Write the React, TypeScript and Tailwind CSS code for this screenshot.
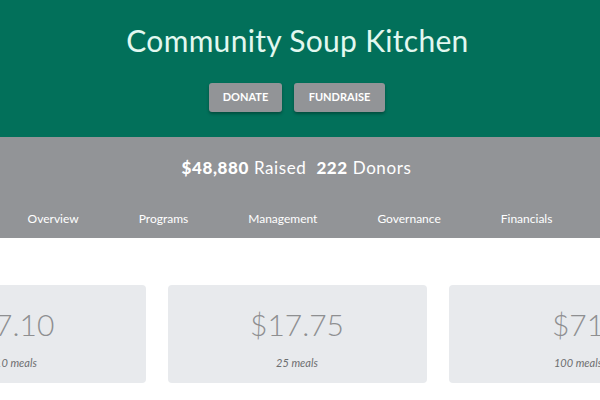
const navItems = ["Overview", "Programs", "Management", "Governance", "Financials"];

const gifts = [
	{ price: "$7.10", label: "10 meals" },
	{ price: "$17.75", label: "25 meals" },
	{ price: "$71", label: "100 meals" },
];

function App() {
	return (
		<div className="w-[600px] h-[400px] overflow-hidden bg-white font-['Lato',sans-serif]">
			<div className="bg-[#02705a] h-[137px] flex flex-col items-center pt-[21px]">
				<h1 className="text-[30px] leading-[38px] text-[#e2f8f0] tracking-[0.3px] ml-[-5px]">Community Soup Kitchen</h1>
				<div className="flex gap-3 mt-[24px] ml-[-6px]">
					<button className="w-[73px] h-[29px] rounded-[3px] bg-[#929497] text-white text-[11px] font-bold shadow-[0_2px_3px_rgba(0,0,0,0.3)]">
						DONATE
					</button>
					<button className="w-[91px] h-[29px] rounded-[3px] bg-[#929497] text-white text-[11px] font-bold shadow-[0_2px_3px_rgba(0,0,0,0.3)]">
						FUNDRAISE
					</button>
				</div>
			</div>
			<div className="bg-[#929497] h-[101px] flex flex-col items-center text-white">
				<div className="mt-[20px] text-[17px] leading-[22px] tracking-[0.6px] ml-[-7px]">
					<strong className="font-black">$48,880</strong> Raised&nbsp;&nbsp;<strong className="font-black">222</strong> Donors
				</div>
				<ul className="flex gap-[60px] mt-[32px] text-[12px] leading-[16px] ml-[-20px]">
					{navItems.map((item) => (
						<li key={item}>{item}</li>
					))}
				</ul>
			</div>
			<div className="flex justify-center gap-[22px] mt-[47px] ml-[-6px]">
				{gifts.map((gift) => (
					<div key={gift.label} className="shrink-0 w-[259px] h-[98px] rounded-[4px] bg-[#e8eaed] flex flex-col items-center pt-[20px]">
						<div className="text-[30px] leading-[38px] font-light text-[#8e8f91]">{gift.price}</div>
						<div className="mt-[12px] text-[11px] italic text-[#6d6e70]">{gift.label}</div>
					</div>
				))}
			</div>
		</div>
	);
}

export default App;
